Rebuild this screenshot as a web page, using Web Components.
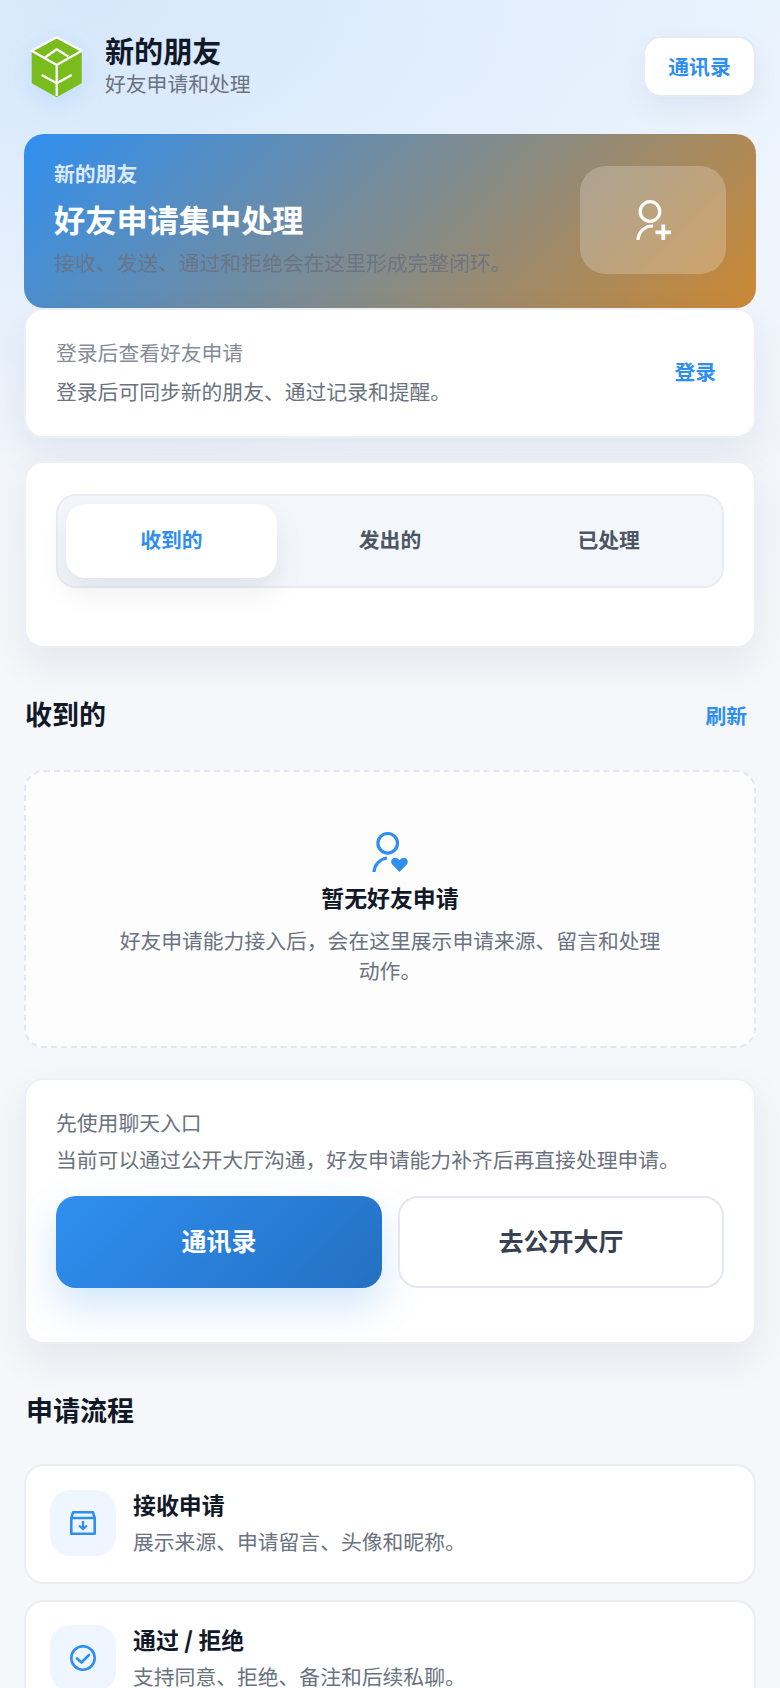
<!DOCTYPE html>
<html lang="zh-CN">
<head>
<meta charset="utf-8">
<title>新的朋友</title>
<style>
    html, body { margin: 0; padding: 0; }
    body {
        width: 780px;
        height: 1688px;
        overflow: hidden;
        font-family: Inter, "Noto Sans CJK SC", sans-serif;
        color: #111827;
        background:
            radial-gradient(760px 480px at 12% 0, #d6e8fb 0, rgba(214,232,251,0) 100%),
            linear-gradient(180deg, #ebf4fe 0, #f5f7fb 620px);
    }
    main { display: flex; flex-direction: column; padding: 36px 24px 0; }
</style>
</head>
<body>
<main>
    <page-header title="新的朋友" subtitle="好友申请和处理" action="通讯录"></page-header>
    <hero-banner eyebrow="新的朋友" title="好友申请集中处理" desc="接收、发送、通过和拒绝会在这里形成完整闭环。"></hero-banner>
    <login-card title="登录后查看好友申请" desc="登录后可同步新的朋友、通过记录和提醒。" action="登录"></login-card>
    <tab-card></tab-card>
    <section-head title="收到的" action="刷新"></section-head>
    <empty-state title="暂无好友申请" desc="好友申请能力接入后，会在这里展示申请来源、留言和处理动作。"></empty-state>
    <cta-card title="先使用聊天入口" desc="当前可以通过公开大厅沟通，好友申请能力补齐后再直接处理申请。" primary="通讯录" secondary="去公开大厅"></cta-card>
    <flow-title>申请流程</flow-title>
    <step-card title="接收申请" desc="展示来源、申请留言、头像和昵称。" icon="inbox"></step-card>
    <step-card title="通过 / 拒绝" desc="支持同意、拒绝、备注和后续私聊。" icon="check"></step-card>
</main>

<script>
    class BaseElement extends HTMLElement {
        constructor() {
            super();
            this.attachShadow({ mode: 'open' });
        }
        connectedCallback() {
            this.shadowRoot.innerHTML = this.render();
        }
        attr(name) {
            return this.getAttribute(name) || '';
        }
    }

    class PageHeader extends BaseElement {
        render() {
            return `
            <style>
                :host { display: flex; align-items: center; height: 64px; margin: 0 0 34px; }
                svg { width: 60px; height: 64px; margin-left: 5px; flex: none; filter: drop-shadow(0 8px 12px rgba(47,143,240,.14)); }
                .text { flex: 1; margin: -2px 0 0 16px; }
                h1 { margin: 0; font-size: 29.12px; line-height: 36px; font-weight: 700; color: #111827; }
                p { margin: 0; font-size: 20.8px; line-height: 28px; color: #6b7280; }
                button {
                    align-self: flex-start; width: 113px; height: 61px; border: 2px solid #e6eaf3; border-radius: 18px; background: #fff;
                    font: 700 20.8px Inter, "Noto Sans CJK SC", sans-serif; color: #2f8ff0; padding: 0 0 2px;
                    box-shadow: 0 12px 28px rgba(15,23,42,.05);
                }
            </style>
            <svg viewBox="0 0 60 64" fill="none">
                <path d="M27.700 1 L52.700 14.700 V47.300 L27.700 61.300 L2.700 47.300 V14.700 Z" fill="#7abb1d"/>
                <path d="M27.700 1.300 L52.700 14.700 L27.700 29 L2.700 14.700 Z M16 21.500 L27.700 13.300 L39.300 20.500 M27.700 29 V60 M12.700 39 L27.700 47.300 L42.700 39" stroke="#fff" stroke-width="2.300" stroke-linejoin="round"/>
            </svg>
            <div class="text">
                <h1>${this.attr('title')}</h1>
                <p>${this.attr('subtitle')}</p>
            </div>
            <button>${this.attr('action')}</button>`;
        }
    }

    class HeroBanner extends BaseElement {
        render() {
            return `
            <style>
                :host {
                    display: flex; align-items: center; justify-content: space-between; box-sizing: border-box;
                    height: 174px; padding: 0 30px; border-radius: 20px;
                    background: linear-gradient(135deg, #2f8ff0 0%, #cc8833 100%);
                }
                .text { padding-bottom: 4px; }
                .eyebrow { font-size: 20.8px; line-height: 30px; font-weight: 700; color: rgba(255,255,255,.82); }
                h2 { margin: 9px 0 6px; font-size: 31.2px; line-height: 44px; font-weight: 700; color: #fff; }
                p { margin: 0; font-size: 20.8px; line-height: 30px; color: #6b7280; opacity: .9; white-space: nowrap; }
                .icon {
                    width: 146px; height: 108px; margin-top: -2px; border-radius: 26px; background: rgba(255,255,255,.22);
                    display: flex; align-items: center; justify-content: center; flex: none;
                }
                svg { width: 48px; height: 48px; }
            </style>
            <div class="text">
                <div class="eyebrow">${this.attr('eyebrow')}</div>
                <h2>${this.attr('title')}</h2>
                <p>${this.attr('desc')}</p>
            </div>
            <div class="icon">
                <svg viewBox="0 0 48 48" fill="none" stroke="#fff" stroke-width="3.200">
                    <circle cx="21" cy="15.500" r="9.800"/>
                    <path d="M9 44a14.500 14.500 0 0 1 15-14"/>
                    <path d="M34.300 28.500v15.500M26.500 36.300h15.500" stroke-width="3.800"/>
                </svg>
            </div>`;
        }
    }

    class LoginCard extends BaseElement {
        render() {
            return `
            <style>
                :host {
                    display: flex; align-items: center; box-sizing: border-box; height: 130px; margin: 0 0 23px;
                    padding: 0 30px; background: #fff; border-radius: 20px; border: 2px solid #edf0f5;
                    box-shadow: 0 16px 40px rgba(15,23,42,.07);
                }
                .text { flex: 1; }
                h3 { margin: 0 0 9px; font-size: 20.8px; line-height: 30px; font-weight: 400; color: #858b99; }
                p { margin: 0; font-size: 20.8px; line-height: 30px; color: #6b7280; }
                span { font-size: 20.8px; font-weight: 700; color: #2f8ff0; margin: -4px 8px 0 0; }
            </style>
            <div class="text">
                <h3>${this.attr('title')}</h3>
                <p>${this.attr('desc')}</p>
            </div>
            <span>${this.attr('action')}</span>`;
        }
    }

    class TabCard extends BaseElement {
        render() {
            return `
            <style>
                :host {
                    display: block; box-sizing: border-box; height: 187px; padding: 31px 30px 0;
                    background: #fff; border-radius: 20px; border: 2px solid #edf0f5;
                    box-shadow: 0 16px 40px rgba(15,23,42,.07);
                }
                .track {
                    display: grid; grid-template-columns: repeat(3, 1fr); gap: 8px; box-sizing: border-box; height: 94px; padding: 8px;
                    background: #f3f6fb; border: 2px solid #e9edf3; border-radius: 20px;
                }
                .tab {
                    display: flex; align-items: center; justify-content: center; border-radius: 20px; padding-bottom: 4px;
                    font-size: 20.8px; font-weight: 700; color: #4b5563;
                }
                .active { background: #fff; color: #2f8ff0; box-shadow: 0 14px 30px rgba(15,23,42,.08); }
            </style>
            <div class="track">
                <div class="tab active">收到的</div>
                <div class="tab">发出的</div>
                <div class="tab">已处理</div>
            </div>`;
        }
    }

    class SectionHead extends BaseElement {
        render() {
            return `
            <style>
                :host {
                    display: flex; align-items: center; justify-content: space-between; box-sizing: border-box;
                    height: 122px; padding: 8px 9px 0 1px;
                }
                h3 { margin: 0; font-size: 27px; font-weight: 700; color: #111827; }
                span { font-size: 20.8px; font-weight: 700; color: #2f8ff0; margin-top: 3px; }
            </style>
            <h3>${this.attr('title')}</h3>
            <span>${this.attr('action')}</span>`;
        }
    }

    class EmptyState extends BaseElement {
        render() {
            return `
            <style>
                :host {
                    display: flex; flex-direction: column; align-items: center; box-sizing: border-box; height: 278px;
                    padding: 56px 90px 0; border: 2px dashed #e2e7f1; border-radius: 20px; background: #fdfdfe;
                    text-align: center; margin-bottom: 30px;
                }
                svg { width: 48px; height: 48px; flex: none; }
                h3 { margin: 6px 0 11px; font-size: 22.88px; line-height: 34px; font-weight: 700; color: #111827; }
                p { margin: 0; font-size: 20.8px; line-height: 30px; color: #6b7280; }
            </style>
            <svg viewBox="0 0 48 48" fill="none">
                <circle cx="21.700" cy="15.300" r="9.800" stroke="#2f8ff0" stroke-width="3.200"/>
                <path d="M8 44a15 15 0 0 1 13-14" stroke="#2f8ff0" stroke-width="3.200"/>
                <path d="M33.500 44 L26.200 36.500 C23.800 33.500 26 29.800 29 29.800 C31 29.800 32.500 30.800 33.500 32.300 C34.500 30.800 36 29.800 38 29.800 C41 29.800 43.200 33.500 40.800 36.500 Z" fill="#2f8ff0"/>
            </svg>
            <h3>${this.attr('title')}</h3>
            <p>${this.attr('desc')}</p>`;
        }
    }

    class CtaCard extends BaseElement {
        render() {
            return `
            <style>
                :host {
                    display: block; box-sizing: border-box; height: 266px; padding: 29px 30px 0;
                    background: #fff; border-radius: 20px; border: 2px solid #edf0f5;
                    box-shadow: 0 16px 40px rgba(15,23,42,.07);
                }
                h3 { margin: 0 0 7px; font-size: 20.8px; line-height: 30px; font-weight: 400; color: #6b7280; }
                p { margin: 0 0 20px; font-size: 20.8px; line-height: 30px; color: #6b7280; white-space: nowrap; }
                .actions { display: grid; grid-template-columns: 1fr 1fr; gap: 16px; }
                button {
                    height: 92px; border-radius: 20px; padding: 0 0 4px;
                    font: 700 24.96px Inter, "Noto Sans CJK SC", sans-serif;
                }
                .primary {
                    border: 0; color: #fff; background: linear-gradient(135deg, #2f8ff0 0%, #2470c2 100%);
                    box-shadow: 0 18px 40px rgba(47,143,240,.22);
                }
                .secondary { background: #fff; border: 2px solid #e2e7f1; color: #374151; }
            </style>
            <h3>${this.attr('title')}</h3>
            <p>${this.attr('desc')}</p>
            <div class="actions">
                <button class="primary">${this.attr('primary')}</button>
                <button class="secondary">${this.attr('secondary')}</button>
            </div>`;
        }
    }

    class FlowTitle extends BaseElement {
        render() {
            return `
            <style>
                :host {
                    display: flex; align-items: center; box-sizing: border-box; height: 120px; padding: 10px 0 0 2px;
                    font-size: 27px; font-weight: 700; color: #111827;
                }
            </style>
            <slot></slot>`;
        }
    }

    const STEP_ICONS = {
        inbox: `<path d="M5.300 12L7 6.300H27L28.700 12V27.700H5.300ZM5.300 12H28.700" stroke-linejoin="round"/>
                <path d="M17 15v8M13 19.500l4 3.500 4-3.500" stroke-width="2.300"/>`,
        check: `<circle cx="17" cy="17" r="11.700"/><path d="M11 17.500l4.500 4 7.500-7.500" stroke-linecap="round" stroke-linejoin="round"/>`
    };

    class StepCard extends BaseElement {
        render() {
            return `
            <style>
                :host {
                    display: flex; align-items: center; gap: 17px; box-sizing: border-box; height: 120px; flex: none;
                    margin: 0 0 16px; padding: 0 24px 2px; background: #fff; border-radius: 20px; border: 2px solid #ebedf2;
                }
                :host(:last-child) { padding-bottom: 5px; }
                .icon {
                    width: 66px; height: 66px; border-radius: 20px; background: #eff6ff; flex: none;
                    display: flex; align-items: center; justify-content: center;
                }
                svg { width: 34px; height: 34px; }
                h4 { margin: 0 0 5px; font-size: 22.88px; line-height: 34px; font-weight: 700; color: #111827; }
                h4 b { font-family: "Noto Sans CJK SC", sans-serif; font-weight: 900; }
                p { margin: 0; font-size: 20.8px; line-height: 30px; color: #6b7280; }
            </style>
            <div class="icon">
                <svg viewBox="0 0 34 34" fill="none" stroke="#2f8ff0" stroke-width="2.600">${STEP_ICONS[this.attr('icon')]}</svg>
            </div>
            <div>
                <h4>${this.attr('title').replace('/', '<b>/</b>')}</h4>
                <p>${this.attr('desc')}</p>
            </div>`;
        }
    }

    customElements.define('page-header', PageHeader);
    customElements.define('hero-banner', HeroBanner);
    customElements.define('login-card', LoginCard);
    customElements.define('tab-card', TabCard);
    customElements.define('section-head', SectionHead);
    customElements.define('empty-state', EmptyState);
    customElements.define('cta-card', CtaCard);
    customElements.define('flow-title', FlowTitle);
    customElements.define('step-card', StepCard);
</script>
</body>
</html>
